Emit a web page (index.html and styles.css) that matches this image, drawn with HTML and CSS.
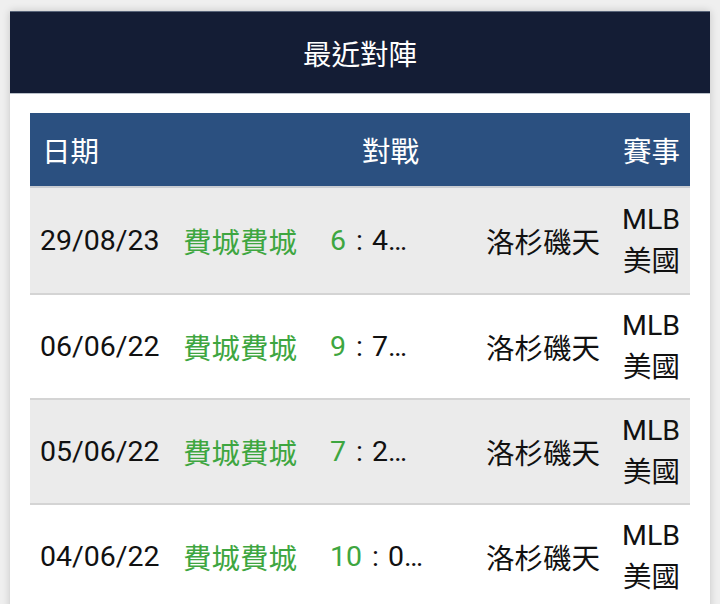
FILE: index.html
```html
<!DOCTYPE html>
<html lang="zh-Hant">
<head>
<meta charset="utf-8">
<link rel="stylesheet" href="styles.css">
</head>
<body>
<div class="panel">
  <div class="panel-title">最近對陣</div>
  <div class="panel-body">
    <div class="table">
      <div class="thead">
        <div class="th th-date">日期</div>
        <div class="th th-match">對戰</div>
        <div class="th th-comp">賽事</div>
      </div>
      <div class="row alt">
        <div class="c-date">29/08/23</div>
        <div class="c-home">費城費城</div>
        <div class="c-score"><span class="win">6</span><span class="sep">:</span><span>4…</span></div>
        <div class="c-away">洛杉磯天</div>
        <div class="c-comp">MLB<br>美國</div>
      </div>
      <div class="row">
        <div class="c-date">06/06/22</div>
        <div class="c-home">費城費城</div>
        <div class="c-score"><span class="win">9</span><span class="sep">:</span><span>7…</span></div>
        <div class="c-away">洛杉磯天</div>
        <div class="c-comp">MLB<br>美國</div>
      </div>
      <div class="row alt">
        <div class="c-date">05/06/22</div>
        <div class="c-home">費城費城</div>
        <div class="c-score"><span class="win">7</span><span class="sep">:</span><span>2…</span></div>
        <div class="c-away">洛杉磯天</div>
        <div class="c-comp">MLB<br>美國</div>
      </div>
      <div class="row">
        <div class="c-date">04/06/22</div>
        <div class="c-home">費城費城</div>
        <div class="c-score"><span class="win">10</span><span class="sep">:</span><span>0…</span></div>
        <div class="c-away">洛杉磯天</div>
        <div class="c-comp">MLB<br>美國</div>
      </div>
    </div>
  </div>
</div>
</body>
</html>
```

FILE: styles.css
```css
html, body {
  margin: 0;
  padding: 0;
  background: #efefef;
}
body {
  padding: 11px 10px 0 10px;
  font-family: Roboto, "Noto Sans CJK TC", sans-serif;
  color: #111;
  overflow: hidden;
}
.panel {
  background: #fff;
  box-shadow: 0 0 8px rgba(0,0,0,0.18);
  min-height: 620px;
}
.panel-title {
  height: 81px;
  background: #141d35;
  border-top: 1px solid #59657a;
  border-bottom: 1px solid #b9c0c9;
  color: #fff;
  font-size: 28.5px;
  display: flex;
  align-items: center;
  justify-content: center;
}
.panel-body {
  padding: 19px 20px 0 20px;
}
.thead {
  height: 73px;
  background: #2b5080;
  color: #fff;
  display: grid;
  grid-template-columns: 320px auto 1fr;
  align-items: center;
  padding: 0 10px 0 12px;
  font-size: 28.5px;
  border-bottom: 2px solid #c9ccd1;
}
.th-comp { text-align: right; }
.row {
  height: 103px;
  display: grid;
  grid-template-columns: 143px 147px 156px 136px 1fr;
  align-items: center;
  padding: 0 10px;
  font-size: 28.5px;
  border-bottom: 2px solid #d4d4d4;
  background: #fff;
}
.thead + .row { height: 105px; }
.row.alt { background: #ebebeb; }
.c-home { color: #3ea640; }
.c-score { white-space: nowrap; }
.win { color: #3ea640; }
.sep { margin: 0 9px 0 10px; }
.c-comp {
  text-align: right;
  line-height: 42px;
}
```
